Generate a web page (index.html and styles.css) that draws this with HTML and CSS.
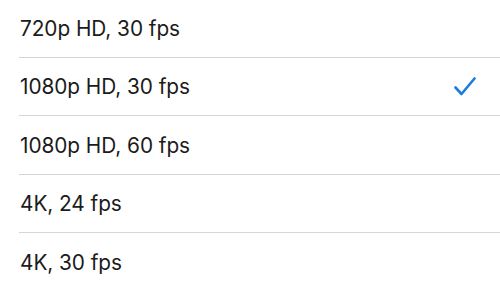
FILE: index.html
```html
<!DOCTYPE html>
<html>
<head>
<meta charset="utf-8">
<link rel="stylesheet" href="styles.css">
</head>
<body>
<ul class="list">
  <li class="row"><div class="cell"><span class="label">720p HD, 30 fps</span></div></li>
  <li class="row"><div class="cell"><span class="label">1080p HD, 30 fps</span>
    <svg class="check" width="22" height="19" viewBox="0 0 22 19"><path d="M1.5 10.5 L7.5 17 L20.5 1.5" fill="none" stroke="#1a7cdc" stroke-width="2.6" stroke-linecap="round" stroke-linejoin="round"/></svg>
  </div></li>
  <li class="row"><div class="cell"><span class="label">1080p HD, 60 fps</span></div></li>
  <li class="row"><div class="cell"><span class="label">4K, 24 fps</span></div></li>
  <li class="row"><div class="cell"><span class="label">4K, 30 fps</span></div></li>
</ul>
</body>
</html>
```
FILE: styles.css
```css
html, body {
  margin: 0;
  padding: 0;
  background: #ffffff;
}
.list {
  list-style: none;
  margin: -1px 0 0 0;
  padding: 0;
  font-family: Inter, "Noto Sans", sans-serif;
  font-size: 20.8px;
  color: #1b1b1b;
}
.row {
  padding-left: 19px;
}
.cell {
  height: 57.5px;
  display: flex;
  align-items: center;
  justify-content: space-between;
  padding-left: 1px;
  padding-right: 24px;
  border-bottom: 1px solid #d6d6d6;
}
.row:last-child .cell {
  border-bottom: none;
}
.label {
  letter-spacing: -0.05px;
  padding-top: 1px;
}
.check {
  display: block;
  margin-top: 1px;
}
```
